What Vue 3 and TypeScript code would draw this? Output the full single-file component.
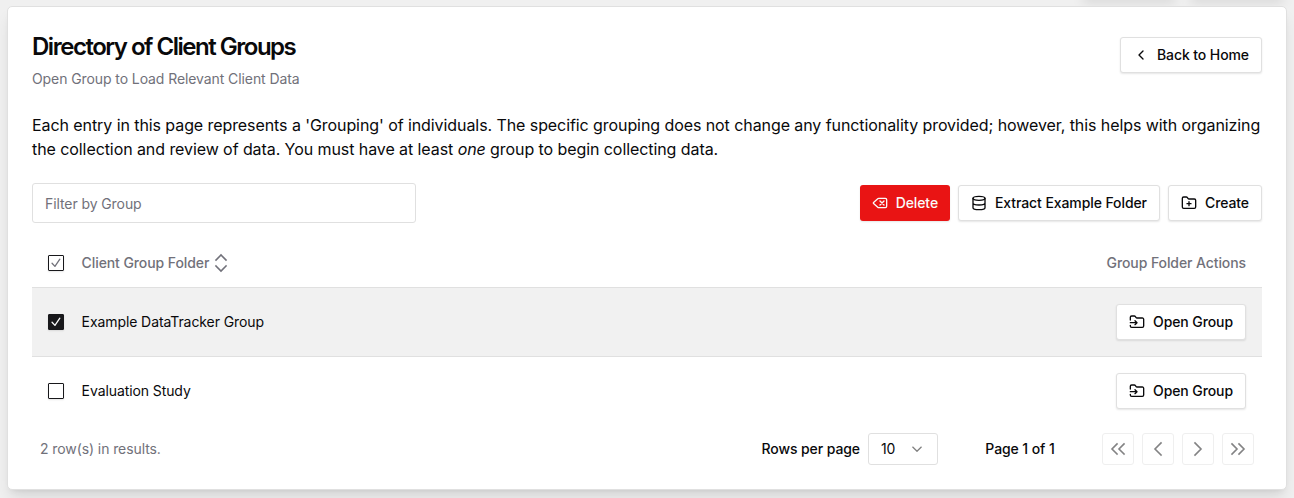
<script setup lang="ts">
import { ref } from 'vue'

interface Group {
  name: string
  selected: boolean
}

const filter = ref('')
const groups = ref<Group[]>([
  { name: 'Example DataTracker Group', selected: true },
  { name: 'Evaluation Study', selected: false },
])

const pagers: { label: string; paths: string[] }[] = [
  { label: 'First page', paths: ['m11 17-5-5 5-5', 'm18 17-5-5 5-5'] },
  { label: 'Previous page', paths: ['m15 18-6-6 6-6'] },
  { label: 'Next page', paths: ['m9 18 6-6-6-6'] },
  { label: 'Last page', paths: ['m6 17 5-5-5-5', 'm13 17 5-5-5-5'] },
]
</script>

<template>
  <div class="page">
    <div class="peek"><i></i><i></i></div>
    <main class="card">
      <header class="head">
        <div>
          <h1>Directory of Client Groups</h1>
          <p class="sub">Open Group to Load Relevant Client Data</p>
        </div>
        <button class="btn back">
          <svg class="icon" viewBox="0 0 24 24"><path d="m15 18-6-6 6-6" /></svg>
          Back to Home
        </button>
      </header>

      <p class="intro">
        Each entry in this page represents a 'Grouping' of individuals. The specific grouping does not change any
        functionality provided; however, this helps with organizing the collection and review of data. You must have at
        least <em>one</em> group to begin collecting data.
      </p>

      <div class="tools">
        <input v-model="filter" class="filter" placeholder="Filter by Group" />
        <div class="actions">
          <button class="btn danger">
            <svg class="icon" viewBox="0 0 24 24">
              <path d="M10 5a2 2 0 0 0-1.344.519l-6.328 5.74a1 1 0 0 0 0 1.481l6.328 5.741A2 2 0 0 0 10 19h10a2 2 0 0 0 2-2V7a2 2 0 0 0-2-2z" />
              <path d="m12 9 6 6M18 9l-6 6" />
            </svg>
            Delete
          </button>
          <button class="btn">
            <svg class="icon" viewBox="0 0 24 24">
              <ellipse cx="12" cy="5" rx="9" ry="3" />
              <path d="M3 5v14a9 3 0 0 0 18 0V5M3 12a9 3 0 0 0 18 0" />
            </svg>
            Extract Example Folder
          </button>
          <button class="btn">
            <svg class="icon" viewBox="0 0 24 24">
              <path d="M12 10v6M9 13h6" />
              <path d="M20 20a2 2 0 0 0 2-2V8a2 2 0 0 0-2-2h-7.900a2 2 0 0 1-1.690-.9L9.600 3.900A2 2 0 0 0 7.930 3H4a2 2 0 0 0-2 2v13a2 2 0 0 0 2 2Z" />
            </svg>
            Create
          </button>
        </div>
      </div>

      <section class="table">
        <div class="row thead">
          <span class="check all">
            <svg viewBox="0 0 15 15"><path d="M3.800 7.700 6.500 10.700 11.100 3.900" /></svg>
          </span>
          <span class="name">Client Group Folder
            <svg class="sort" viewBox="0 0 24 24"><path d="m7 15 5 5 5-5M7 9l5-5 5 5" /></svg>
          </span>
          <span>Group Folder Actions</span>
        </div>
        <div v-for="g in groups" :key="g.name" class="row" :class="{ selected: g.selected }">
          <span class="check" :class="{ on: g.selected }" @click="g.selected = !g.selected">
            <svg v-if="g.selected" viewBox="0 0 15 15"><path d="M3.800 7.700 6.500 10.700 11.100 3.900" /></svg>
          </span>
          <span class="name">{{ g.name }}</span>
          <button class="btn">
            <svg class="icon" viewBox="0 0 24 24">
              <path d="M2 9V5a2 2 0 0 1 2-2h3.900a2 2 0 0 1 1.690.9l.81 1.200a2 2 0 0 0 1.670.9H20a2 2 0 0 1 2 2v10a2 2 0 0 1-2 2H4a2 2 0 0 1-2-2v-1" />
              <path d="M2 13h10M9 16l3-3-3-3" />
            </svg>
            Open Group
          </button>
        </div>
      </section>

      <footer class="foot">
        <span class="count">{{ groups.length }} row(s) in results.</span>
        <span class="rows">Rows per page</span>
        <button class="select">
          10
          <svg class="icon" viewBox="0 0 15 15"><path d="m3.500 5.700 4 3.900 4-3.900" /></svg>
        </button>
        <span class="pages">Page 1 of 1</span>
        <div class="pager">
          <button v-for="p in pagers" :key="p.label" :aria-label="p.label" disabled>
            <svg viewBox="0 0 24 24"><path v-for="d in p.paths" :key="d" :d="d" /></svg>
          </button>
        </div>
      </footer>
    </main>
  </div>
</template>

<style>
body {
  background: #f0f0f0;
  overflow: hidden;
}
</style>

<style scoped>
* {
  box-sizing: border-box;
}
.page {
  position: relative;
  height: 498px;
  padding: 6px 7px 8px;
  overflow: hidden;
  font: 400 14px/20px Inter, sans-serif;
  letter-spacing: -0.09px;
  color: #09090b;
}
.peek {
  position: absolute;
  top: -10px;
  right: 10px;
  display: flex;
  gap: 14px;
}
.peek i {
  width: 94px;
  height: 8px;
  border-radius: 4px;
  box-shadow: 0 4px 12px rgba(0, 0, 0, 0.13);
}
.card {
  position: relative;
  height: 484px;
  padding: 24px;
  border: 1px solid #e0e0e0;
  border-radius: 5px;
  background: #fff;
  box-shadow: 0 10px 15px -3px rgba(0, 0, 0, 0.1), 0 4px 6px -4px rgba(0, 0, 0, 0.1);
}
h1,
p {
  margin: 0;
}
h1 {
  font-size: 24px;
  line-height: 32px;
  font-weight: 600;
  letter-spacing: -1.48px;
}
.head {
  display: flex;
  justify-content: space-between;
  height: 82px;
}
.sub {
  margin-top: 6px;
  color: #71717a;
}
button,
input {
  font: inherit;
  letter-spacing: inherit;
  color: inherit;
}
.btn {
  display: inline-flex;
  align-items: center;
  gap: 8px;
  height: 36px;
  padding: 0 12px;
  border: 1px solid #e0e0e0;
  border-radius: 3px;
  background: #fff;
  font-weight: 500;
  white-space: nowrap;
  box-shadow: 0 1px 2px rgba(0, 0, 0, 0.1);
}
.back {
  margin-top: 6px;
}
.danger {
  border: 0;
  background: #e91414;
  color: #fafafa;
}
svg {
  display: block;
  flex: none;
  fill: none;
  stroke: currentColor;
  stroke-width: 2;
  stroke-linecap: round;
  stroke-linejoin: round;
}
.icon {
  width: 16px;
  height: 16px;
}
.intro {
  font-size: 16px;
  line-height: 24px;
  letter-spacing: -0.078px;
}
.tools {
  display: flex;
  align-items: center;
  justify-content: space-between;
  height: 40px;
  margin: 22px 0 16px;
}
.filter {
  width: 384px;
  height: 40px;
  padding: 1px 12px 0;
  border: 1px solid #e0e0e0;
  border-radius: 3px;
  background: #fff;
  outline: none;
}
.filter::placeholder {
  color: #71717a;
  opacity: 1;
}
.actions {
  display: flex;
  gap: 8px;
}
.row {
  display: flex;
  align-items: center;
  height: 68px;
  padding: 0 16px;
}
.thead {
  height: 49px;
  border-bottom: 1px solid #e0e0e0;
  color: #71717a;
  font-weight: 500;
}
.selected {
  height: 69px;
  border-bottom: 1px solid #e0e0e0;
  background: #f1f1f1;
}
.name {
  display: flex;
  align-items: center;
  flex: 1;
  margin-left: 17.600px;
}
.sort {
  width: 24px;
  height: 24px;
  stroke-width: 1.600;
  stroke-linecap: square;
  stroke-linejoin: miter;
}
.check {
  display: grid;
  place-items: center;
  width: 16px;
  height: 16px;
  border: 1px solid #18181b;
  border-radius: 1px;
  box-shadow: 0 1px 2px rgba(0, 0, 0, 0.1);
}
.check svg {
  width: 16px;
  height: 16px;
  margin: -1px;
  stroke-width: 1.200;
}
.on {
  background: #18181b;
  color: #fafafa;
}
.foot {
  display: flex;
  align-items: center;
  height: 32px;
  margin-top: 8px;
  padding: 0 8px;
  font-weight: 500;
}
.count {
  flex: 1;
  color: #71717a;
  font-weight: 400;
}
.select {
  display: flex;
  align-items: center;
  justify-content: space-between;
  width: 70px;
  height: 32px;
  margin-left: 8px;
  padding: 0 12px;
  border: 1px solid #e0e0e0;
  border-radius: 3px;
  background: #fff;
  font-weight: 400;
}
.select .icon {
  color: #808080;
  stroke-width: 1.200;
}
.pages {
  width: 100px;
  margin: 0 32px;
  text-align: center;
}
.pager {
  display: flex;
  gap: 8px;
}
.pager button {
  display: grid;
  place-items: center;
  width: 32px;
  height: 32px;
  padding: 0;
  border: 1px solid #e0e0e0;
  border-radius: 3px;
  background: #fff;
  opacity: 0.5;
}
.pager svg {
  width: 24px;
  height: 24px;
  stroke-width: 1.600;
  stroke-linecap: square;
  stroke-linejoin: miter;
}
</style>
